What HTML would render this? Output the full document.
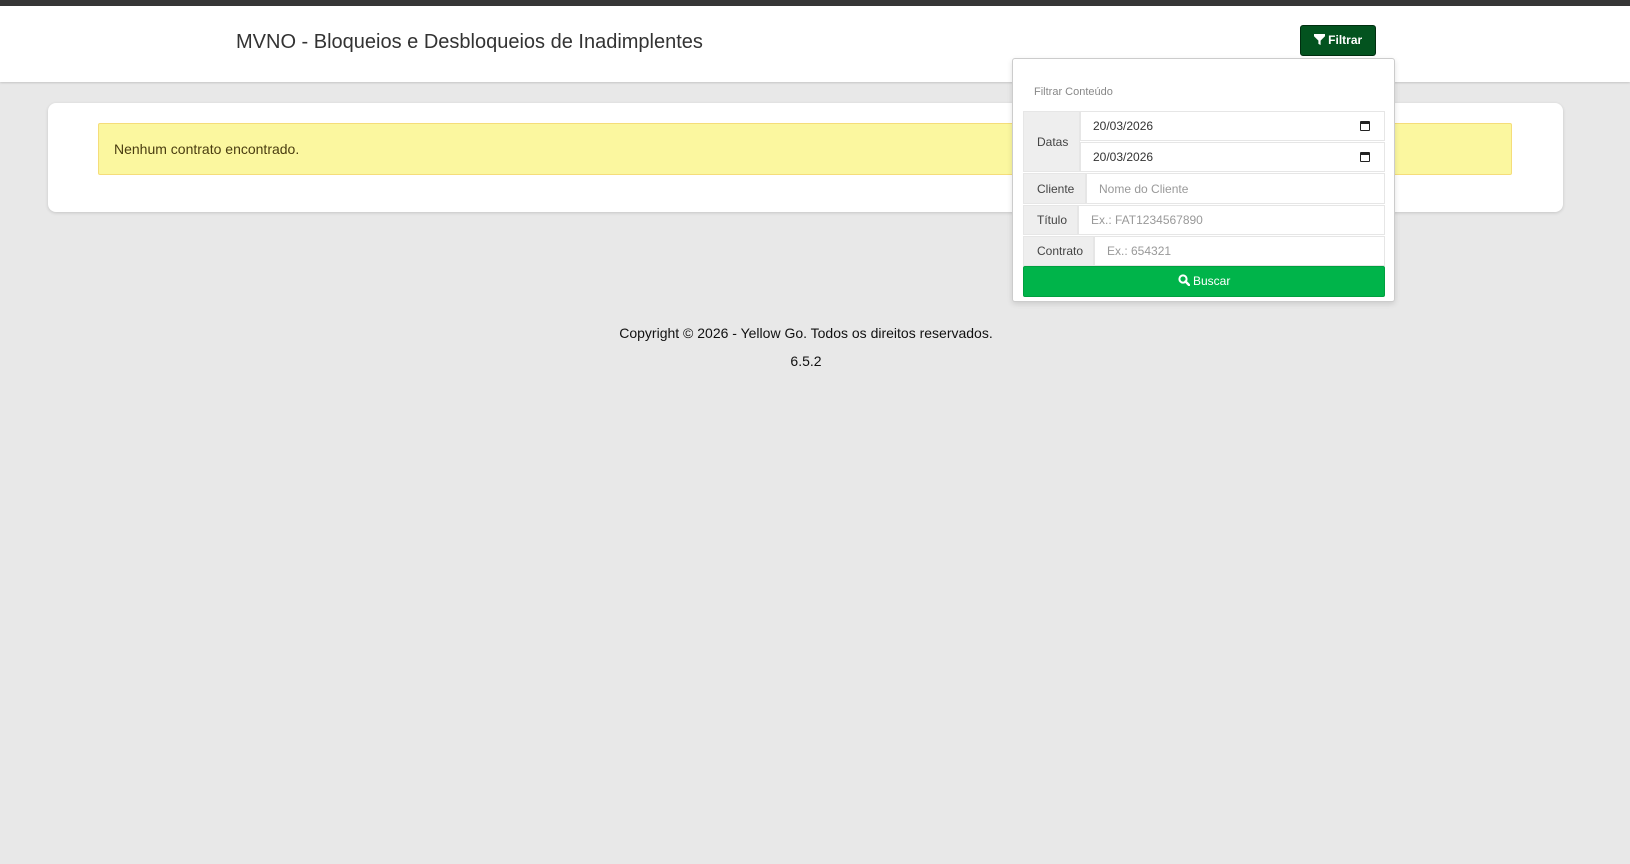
<!DOCTYPE html>
<html><head><meta charset="utf-8"><style>
*{box-sizing:border-box}
body{margin:0;width:1630px;height:864px;background:#e8e8e8;font-family:"Liberation Sans",sans-serif;position:relative;overflow:hidden}
.top{position:absolute;left:0;top:0;width:1630px;height:6px;background:#363636}
.hdr{position:absolute;left:0;top:6px;width:1630px;height:76px;background:#fff;box-shadow:0 1px 2px rgba(0,0,0,.15)}
.title{position:absolute;left:236px;top:24px;font-size:20px;color:#333;line-height:24px}
.btn{position:absolute;left:1300px;top:25px;width:76px;height:31px;background:#03531f;border:1px solid #012e10;border-radius:3px;color:#fff;font-weight:bold;font-size:12px;line-height:29px;text-align:center}
.card{position:absolute;left:48px;top:103px;width:1515px;height:109px;background:#fff;border-radius:8px;box-shadow:0 1px 3px rgba(0,0,0,.15)}
.alert{position:absolute;left:50px;top:20px;width:1414px;height:52px;background:#fbf79f;border:1px solid #f5dd7a;border-radius:2px;color:#4a3d10;font-size:14px;line-height:50px;padding-left:15px}
.foot{position:absolute;left:0;width:1612px;text-align:center;font-size:14px;color:#111}
.dd{position:absolute;left:1012px;top:58px;width:383px;height:244px;background:#fff;border:1px solid #ccc;border-radius:3px;box-shadow:0 2px 6px rgba(0,0,0,.12)}
.lab{position:absolute;left:21px;top:27px;font-size:11px;color:#888}
.row{position:absolute;left:10px;width:362px;display:flex;font-size:12px}
.row .l{background:#eee;color:#444;padding-left:13px;display:flex;align-items:center;border:1px solid #e6e6e6}
.row .i{flex:1;border:1px solid #e6e6e6;background:#fff;display:flex;align-items:center;padding-left:12px;color:#999}
.date{position:absolute;left:57px;width:305px;height:30px;border:1px solid #e6e6e6;color:#333;font-size:12px;line-height:28px;padding-left:12px}
.cal{position:absolute;right:14px;top:9px;width:10px;height:10px;border:1.5px solid #222;border-top-width:3px;border-radius:1px}
.bus{position:absolute;left:10px;top:207px;width:362px;height:31px;background:#00b44a;border:1px solid #00a040;border-radius:2px;color:#fff;font-size:12px;text-align:center;line-height:29px}
</style></head><body>
<div class="top"></div>
<div class="hdr"><div class="title">MVNO - Bloqueios e Desbloqueios de Inadimplentes</div></div>
<div class="btn"><svg width="11" height="11" viewBox="0 0 10 10" style="vertical-align:-1px"><path d="M0 0H10V2L6 6V10L4 9V6L0 2Z" fill="#fff"/></svg> Filtrar</div>
<div class="card"><div class="alert">Nenhum contrato encontrado.</div></div>
<div class="foot" style="top:325px">Copyright © 2026 - Yellow Go. Todos os direitos reservados.</div>
<div class="foot" style="top:353px">6.5.2</div>
<div class="dd">
<div class="lab">Filtrar Conteúdo</div>
<div class="row" style="top:52px;height:61px"><div class="l" style="width:57px">Datas</div></div>
<div class="date" style="top:52px;left:67px">20/03/2026<span class="cal"></span></div>
<div class="date" style="top:83px;left:67px">20/03/2026<span class="cal"></span></div>
<div class="row" style="top:114px;height:31px"><div class="l" style="width:63px">Cliente</div><div class="i">Nome do Cliente</div></div>
<div class="row" style="top:146px;height:30px"><div class="l" style="width:55px">Título</div><div class="i">Ex.: FAT1234567890</div></div>
<div class="row" style="top:177px;height:30px"><div class="l" style="width:71px">Contrato</div><div class="i">Ex.: 654321</div></div>
<div class="bus"><svg width="12" height="12" viewBox="0 0 12 12" style="vertical-align:-1px"><circle cx="5" cy="5" r="3.6" fill="none" stroke="#fff" stroke-width="2"/><path d="M7.5 7.5L11 11" stroke="#fff" stroke-width="2.4" stroke-linecap="round"/></svg> Buscar</div>
</div>
</body></html>
